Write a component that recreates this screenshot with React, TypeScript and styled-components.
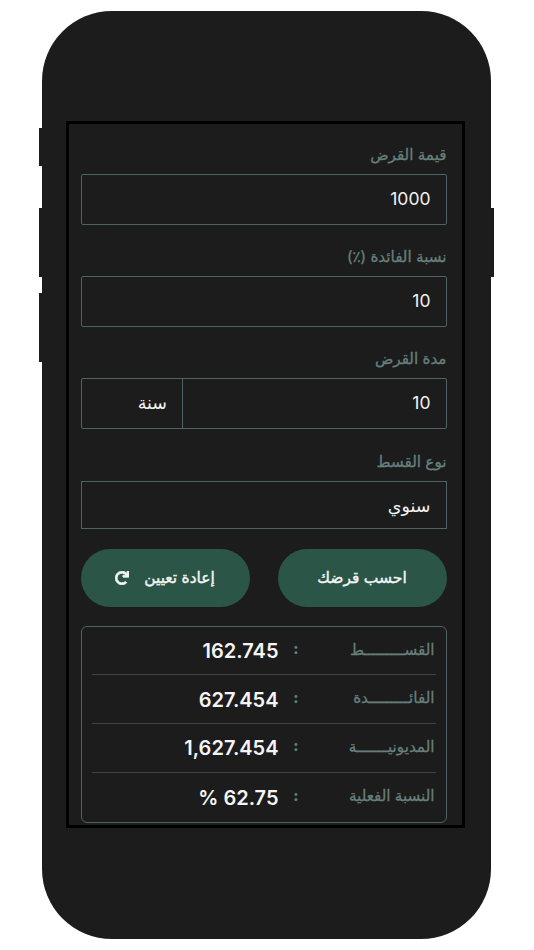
import { FaRedo } from "react-icons/fa";
import styled, { createGlobalStyle } from "styled-components";

const results = [
  { label: "القســـــــــط", value: "162.745" },
  { label: "الفائـــــــــدة", value: "627.454" },
  { label: "المديونيـــــــة", value: "1,627.454" },
  { label: "النسبة الفعلية", value: "% 62.75" },
];

const App = () => {
  return (
    <Page>
      <GlobalStyle />
      <Phone>
        <SideKey $side="left" $top={117.5} $height={38} />
        <SideKey $side="left" $top={197.5} $height={69} />
        <SideKey $side="left" $top={282.5} $height={69} />
        <SideKey $side="right" $top={197.5} $height={69} />
        <Screen dir="rtl">
          <Field>
            <Label>قيمة القرض</Label>
            <InputBox>
              <Value>1000</Value>
            </InputBox>
          </Field>
          <Field>
            <Label>نسبة الفائدة (٪)</Label>
            <InputBox>
              <Value>10</Value>
            </InputBox>
          </Field>
          <Field>
            <Label>مدة القرض</Label>
            <InputBox>
              <Value>10</Value>
              <Unit>سنة</Unit>
            </InputBox>
          </Field>
          <Field>
            <Label>نوع القسط</Label>
            <InputBox $select>
              <Value>سنوي</Value>
            </InputBox>
          </Field>
          <Buttons>
            <Button>احسب قرضك</Button>
            <Button>
              إعادة تعيين
              <ResetIcon />
            </Button>
          </Buttons>
          <Results>
            {results.map((row) => (
              <Row key={row.label}>
                <RowLabel>{row.label}</RowLabel>
                <Colon>:</Colon>
                <RowValue dir="ltr">{row.value}</RowValue>
              </Row>
            ))}
          </Results>
        </Screen>
      </Phone>
    </Page>
  );
};

const GlobalStyle = createGlobalStyle`
  html, body {
    margin: 0;
    background: #fff;
  }
  * {
    box-sizing: border-box;
  }
`;

const Page = styled.div`
  width: 534px;
  height: 950px;
  padding: 10.5px 0 0 42px;
  overflow: hidden;
  font-family: Inter, "Noto Sans", "DejaVu Sans", sans-serif;
`;

const Phone = styled.div`
  position: relative;
  width: 449px;
  height: 928.5px;
  padding: 110.5px 0 0 24px;
  background: #1c1c1c;
  border-radius: 70px;
`;

const SideKey = styled.div<{ $side: "left" | "right"; $top: number; $height: number }>`
  position: absolute;
  ${(props) => props.$side}: -3px;
  top: ${(props) => props.$top}px;
  width: 3px;
  height: ${(props) => props.$height}px;
  background: #1c1c1c;
`;

const Screen = styled.div`
  width: 399px;
  height: 706.5px;
  padding: 21px 15.5px 0 11.5px;
  background: #1c1c1c;
  border: 3.5px solid #000;
`;

const Field = styled.div`
  height: 102.2px;
`;

const Label = styled.div`
  height: 19px;
  margin-bottom: 10px;
  color: #67807e;
  font-size: 15.2px;
  font-weight: 400;
  line-height: 19px;
  -webkit-text-stroke: 0.3px #67807e;
`;

const InputBox = styled.div<{ $select?: boolean }>`
  display: flex;
  height: ${(props) => (props.$select ? "48.5px" : "50.5px")};
  border: 1.3px solid #4f6362;
  border-radius: ${(props) => (props.$select ? "0" : "2px")};
`;

const Value = styled.div`
  flex: 1;
  padding: 0 15px;
  color: #f2f2f2;
  font-size: 17.5px;
  line-height: 48px;
`;

const Unit = styled.div`
  width: 101.5px;
  padding: 0 15px;
  color: #f2f2f2;
  font-size: 17.5px;
  line-height: 48px;
  border-right: 1.3px solid #4f6362;
`;

const Buttons = styled.div`
  display: grid;
  grid-template-columns: 169px 169px;
  justify-content: space-between;
  margin-top: -5px;
`;

const Button = styled.button`
  display: flex;
  align-items: center;
  justify-content: center;
  gap: 15px;
  height: 58px;
  padding: 0;
  color: #f5f5f5;
  background: #2a5547;
  border: none;
  border-radius: 29px;
  font-family: inherit;
  font-size: 15.5px;
  font-weight: 400;
  -webkit-text-stroke: 0.4px #f5f5f5;
`;

const ResetIcon = styled(FaRedo)`
  width: 14px;
  height: 14px;
  stroke: currentColor;
  stroke-width: 30px;
`;

const Results = styled.div`
  height: 197px;
  margin-top: 19px;
  padding: 0 10px;
  border: 1.3px solid #4f6362;
  border-radius: 6px;
`;

const Row = styled.div`
  display: grid;
  grid-template-columns: 131px 17px 1fr;
  align-items: center;
  height: 48.7px;
  border-bottom: 1px solid #3a4645;
  &:last-child {
    border-bottom: none;
  }
`;

const RowLabel = styled.div`
  padding: 0 1px 3px 0;
  color: #67807e;
  font-size: 15.2px;
  font-weight: 400;
  -webkit-text-stroke: 0.3px #67807e;
`;

const Colon = styled.div`
  padding-bottom: 4px;
  color: #67807e;
  font-size: 15px;
  font-weight: 800;
  text-align: center;
`;

const RowValue = styled.div`
  padding: 1px 9px 0 0;
  color: #f5f5f5;
  font-size: 20px;
  font-weight: 600;
  text-align: right;
`;

export default App;
